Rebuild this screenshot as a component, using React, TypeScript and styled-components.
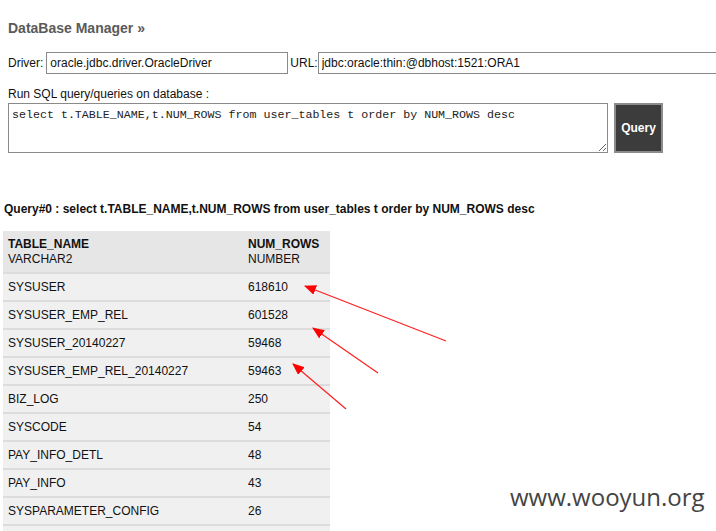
import React from "react";
import styled, { createGlobalStyle } from "styled-components";

const Global = createGlobalStyle`
  html, body { margin: 0; padding: 0; background: #fff; }
  body { font-family: "Liberation Sans", Arial, sans-serif; font-size: 12px; color: #111; }
  #root { position: relative; width: 716px; height: 531px; overflow: hidden; }
`;

const Page = styled.div`
  display: flex;
  flex-direction: column;
`;

const Title = styled.h2`
  margin: 20px 0 0 8px;
  font-size: 14px;
  line-height: 16px;
  font-weight: bold;
  color: #5a5a5a;
`;

const DriverRow = styled.div`
  display: flex;
  align-items: center;
  margin: 16px 0 0 8px;
  height: 22px;
  white-space: nowrap;
`;

const Label = styled.span<{ $gap?: number }>`
  font-size: 12px;
  color: #111;
  margin-right: ${(p) => p.$gap ?? 0}px;
`;

const TextInput = styled.input<{ $w: number }>`
  box-sizing: border-box;
  width: ${(p) => p.$w}px;
  flex: none;
  height: 22px;
  border: 1px solid #8a8a8a;
  padding: 0 3px;
  font-family: "Liberation Sans", Arial, sans-serif;
  font-size: 12px;
  color: #111;
  margin: 0 2px 0 0;
  outline: none;
`;

const SqlLabel = styled.div`
  margin: 13px 0 0 8px;
  line-height: 14px;
  font-size: 12px;
`;

const QueryRow = styled.div`
  display: flex;
  gap: 6px;
  margin: 2px 0 0 8px;
`;

const SqlArea = styled.textarea`
  box-sizing: border-box;
  width: 600px;
  height: 50px;
  border: 1px solid #8a8a8a;
  padding: 4px 3px;
  font-family: "Liberation Mono", "Courier New", monospace;
  font-size: 11.65px;
  line-height: 13px;
  color: #222;
  resize: both;
  margin: 0;
  outline: none;
`;

const QueryButton = styled.button`
  box-sizing: border-box;
  width: 49px;
  height: 50px;
  background: #3c3c3c;
  border: 2px solid #8c8c8c;
  color: #fff;
  font-family: "Liberation Sans", Arial, sans-serif;
  font-size: 12px;
  font-weight: bold;
  padding: 0;
  cursor: pointer;
`;

const ResultTitle = styled.div`
  margin: 49px 0 0 4px;
  line-height: 14px;
  font-size: 12px;
  font-weight: bold;
  color: #111;
`;

const Table = styled.table`
  margin: 15px 0 0 3px;
  width: 327px;
  table-layout: fixed;
  border-collapse: collapse;
  font-size: 12px;
`;

const HeadCell = styled.th<{ $w?: number }>`
  background: #e6e6e6;
  text-align: left;
  font-weight: normal;
  padding: 0 0 0 5px;
  height: 42px;
  box-sizing: border-box;
  vertical-align: middle;
  line-height: 15px;
  border-bottom: 2px solid #dcdcdc;
  ${(p) => (p.$w ? `width: ${p.$w}px;` : "")}
  b { font-weight: bold; display: block; }
`;

const Row = styled.tr`
  background: #f0f0f0;
`;

const Cell = styled.td`
  padding: 0 0 0 5px;
  height: 28px;
  box-sizing: border-box;
  border-bottom: 2px solid #dcdcdc;
  vertical-align: middle;
  color: #111;
`;

const Overlay = styled.svg`
  position: absolute;
  left: 0;
  top: 0;
  pointer-events: none;
`;

const Watermark = styled.div`
  position: absolute;
  left: 510px;
  top: 485px;
  font-family: "Open Sans", "Noto Sans", sans-serif;
  font-size: 24px;
  line-height: 24px;
  color: #444;
`;

const rows: [string, string][] = [
  ["SYSUSER", "618610"],
  ["SYSUSER_EMP_REL", "601528"],
  ["SYSUSER_20140227", "59468"],
  ["SYSUSER_EMP_REL_20140227", "59463"],
  ["BIZ_LOG", "250"],
  ["SYSCODE", "54"],
  ["PAY_INFO_DETL", "48"],
  ["PAY_INFO", "43"],
  ["SYSPARAMETER_CONFIG", "26"],
  ["", ""],
];

const arrows = [
  { x1: 446, y1: 341, x2: 305, y2: 286 },
  { x1: 378, y1: 373, x2: 313, y2: 328 },
  { x1: 346, y1: 409, x2: 293, y2: 364 },
];

export default function App() {
  return (
    <>
      <Global />
      <Page>
        <Title>DataBase Manager »</Title>
        <DriverRow>
          <Label $gap={3}>Driver:</Label>
          <TextInput $w={242} defaultValue="oracle.jdbc.driver.OracleDriver" />
          <Label>URL:</Label>
          <TextInput $w={430} defaultValue="jdbc:oracle:thin:@dbhost:1521:ORA1" />
        </DriverRow>
        <SqlLabel>Run SQL query/queries on database :</SqlLabel>
        <QueryRow>
          <SqlArea defaultValue="select t.TABLE_NAME,t.NUM_ROWS from user_tables t order by NUM_ROWS desc" />
          <QueryButton>Query</QueryButton>
        </QueryRow>
        <ResultTitle>
          Query#0 : select t.TABLE_NAME,t.NUM_ROWS from user_tables t order by NUM_ROWS desc
        </ResultTitle>
        <Table>
          <thead>
            <tr>
              <HeadCell $w={240}>
                <b>TABLE_NAME</b>VARCHAR2
              </HeadCell>
              <HeadCell>
                <b>NUM_ROWS</b>NUMBER
              </HeadCell>
            </tr>
          </thead>
          <tbody>
            {rows.map(([n, v], i) => (
              <Row key={i}>
                <Cell>{n}</Cell>
                <Cell>{v}</Cell>
              </Row>
            ))}
          </tbody>
        </Table>
      </Page>
      <Overlay width="716" height="531" viewBox="0 0 716 531">
        <defs>
          <marker id="ah" markerWidth="12" markerHeight="10" refX="11" refY="5" orient="auto" markerUnits="userSpaceOnUse">
            <path d="M0,0 L12,5 L0,10 z" fill="#ff0000" />
          </marker>
        </defs>
        {arrows.map((a, i) => (
          <line key={i} x1={a.x1} y1={a.y1} x2={a.x2} y2={a.y2} stroke="#ff2020" strokeWidth="1.2" markerEnd="url(#ah)" />
        ))}
      </Overlay>
      <Watermark>www.wooyun.org</Watermark>
    </>
  );
}
